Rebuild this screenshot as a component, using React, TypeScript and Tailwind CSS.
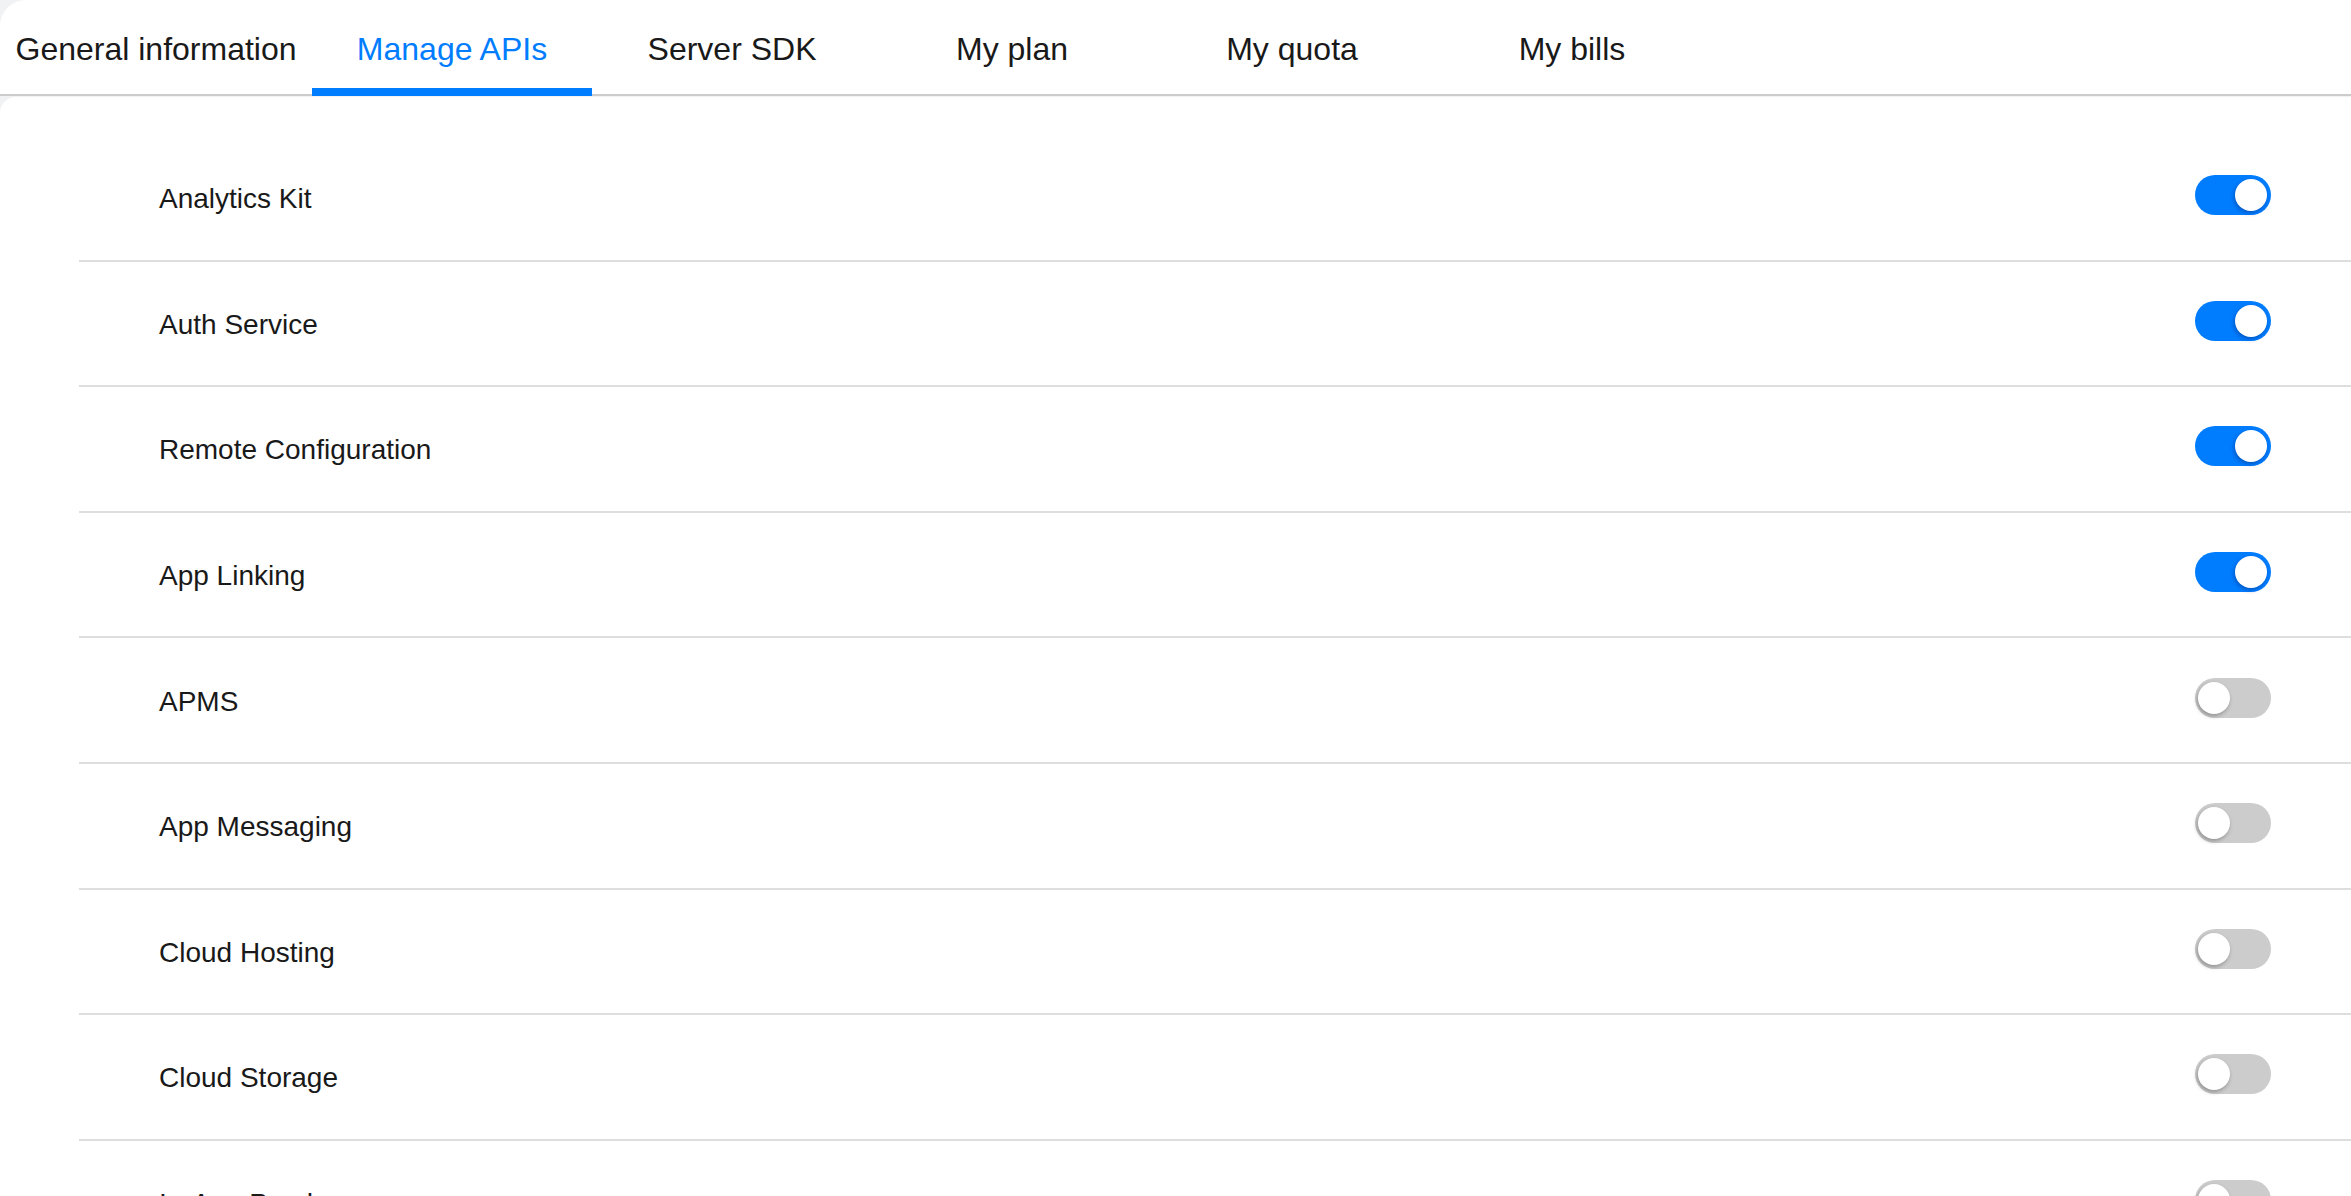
import { useState } from 'react';

const TABS = ['General information', 'Manage APIs', 'Server SDK', 'My plan', 'My quota', 'My bills'];

const APIS: { name: string; enabled: boolean }[] = [
  { name: 'Analytics Kit', enabled: true },
  { name: 'Auth Service', enabled: true },
  { name: 'Remote Configuration', enabled: true },
  { name: 'App Linking', enabled: true },
  { name: 'APMS', enabled: false },
  { name: 'App Messaging', enabled: false },
  { name: 'Cloud Hosting', enabled: false },
  { name: 'Cloud Storage', enabled: false },
  { name: 'In-App Purchases', enabled: false },
];

function Toggle({ on, onChange }: { on: boolean; onChange: () => void }) {
  return (
    <button
      type="button"
      onClick={onChange}
      className={`flex items-center w-[76px] h-[40px] mb-[5px] rounded-full shrink-0 ${
        on ? 'bg-[#007dff] justify-end pr-[4px]' : 'bg-[#cccccc] justify-start pl-[3px]'
      }`}
    >
      <span
        className={`block w-[32px] h-[32px] rounded-full bg-white ${
          on ? 'shadow-[-1px_2px_4px_rgba(0,40,120,0.45)]' : 'shadow-[-1px_2px_4px_rgba(0,0,0,0.3)]'
        }`}
      />
    </button>
  );
}

export default function App() {
  const [active, setActive] = useState(1);
  const [apis, setApis] = useState(APIS);

  return (
    <div className="min-h-screen bg-[#f1f2f4] font-['Liberation_Sans',Arial,sans-serif] text-[#191919]">
      {/* tab bar */}
      <div className="flex h-[96px] bg-white rounded-tl-[26px] border-b-2 border-[#cccccc]">
        {TABS.map((tab, i) => (
          <button
            key={tab}
            type="button"
            onClick={() => setActive(i)}
            className={`relative flex items-center justify-center h-full pt-[3px] text-[32px] whitespace-nowrap ${
              i === 0 ? 'w-[312px]' : 'w-[280px]'
            } ${i === active ? 'text-[#007dff]' : 'text-[#191919]'}`}
          >
            {tab}
            {i === active && <span className="absolute left-0 right-0 -bottom-[2px] h-[8px] bg-[#007dff]" />}
          </button>
        ))}
      </div>

      {/* api list */}
      <div className="mt-px bg-white rounded-tl-[16px] pt-[39px] pl-[79px]">
        {apis.map((api, i) => (
          <div
            key={api.name}
            className="flex items-center justify-between h-[125.6px] pl-[80px] pr-[80px] border-b-2 border-[#dedede]"
          >
            <span className="pt-[3px] text-[28px] leading-none">{api.name}</span>
            <Toggle
              on={api.enabled}
              onChange={() =>
                setApis((prev) => prev.map((a, j) => (j === i ? { ...a, enabled: !a.enabled } : a)))
              }
            />
          </div>
        ))}
      </div>
    </div>
  );
}
